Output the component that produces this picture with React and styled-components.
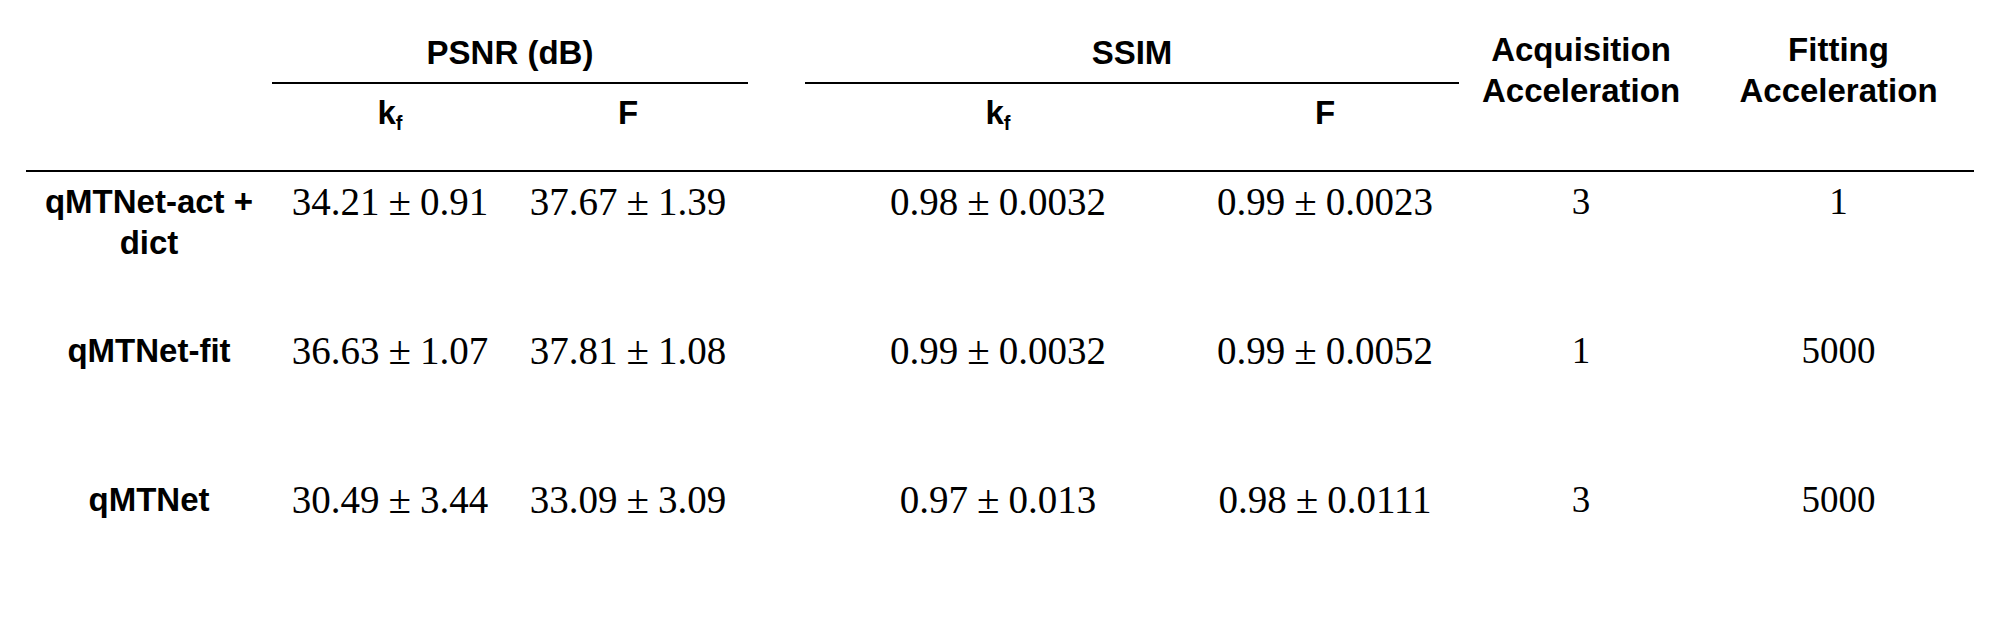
import React from "react";
import styled, { createGlobalStyle } from "styled-components";

const GlobalStyle = createGlobalStyle`
  html, body {
    margin: 0;
    padding: 0;
    background: #ffffff;
  }
  body {
    width: 2000px;
    height: 618px;
    overflow: hidden;
    color: #000;
    font-family: "Liberation Sans", Arial, sans-serif;
  }
`;

const Table = styled.div`
  display: grid;
  grid-template-columns: 246px 236px 240px 57px 386px 268px 244px 271px;
  grid-template-rows: 84px 86px 2px repeat(3, 149px);
  margin-left: 26px;
  width: 1948px;
`;

const HeadText = styled.div`
  font-family: "Liberation Sans", Arial, sans-serif;
  font-weight: 700;
  font-size: 33px;
  line-height: 41px;
  text-align: center;
`;

const GroupTitle = styled(HeadText)`
  grid-row: 1;
  grid-column: ${({ $col }) => $col} / span 2;
  padding-top: 32px;
  border-bottom: 2px solid #000;
  box-sizing: border-box;
`;

const SpanTitle = styled(HeadText)`
  grid-row: 1 / span 2;
  grid-column: ${({ $col }) => $col};
  padding-top: 29px;
`;

const SubTitle = styled(HeadText)`
  grid-row: 2;
  grid-column: ${({ $col }) => $col};
  padding-top: 8px;
  sub {
    font-size: 20px;
    line-height: 0;
    vertical-align: -6px;
  }
`;

const Rule = styled.div`
  grid-row: 3;
  grid-column: 1 / -1;
  background: #000;
`;

const RowLabel = styled(HeadText)`
  grid-column: 1;
  grid-row: ${({ $row }) => $row};
  padding-top: 9px;
`;

const Value = styled.div`
  grid-column: ${({ $col }) => $col};
  grid-row: ${({ $row }) => $row};
  padding-top: ${({ $plain }) => ($plain ? "9px" : "9px")};
  font-family: "Liberation Serif", "Times New Roman", serif;
  font-size: ${({ $plain }) => ($plain ? "37px" : "39px")};
  line-height: 41px;
  text-align: center;
  white-space: nowrap;
`;

const Pm = styled.span`
  display: inline-block;
  margin: 0 9px;
  font-size: 41px;
`;

const Stat = ({ mean, sd }) => (
  <>
    {mean}
    <Pm>±</Pm>
    {sd}
  </>
);

const rows = [
  {
    name: "qMTNet-act + dict",
    psnr: [["34.21", "0.91"], ["37.67", "1.39"]],
    ssim: [["0.98", "0.0032"], ["0.99", "0.0023"]],
    acq: "3",
    fit: "1",
  },
  {
    name: "qMTNet-fit",
    psnr: [["36.63", "1.07"], ["37.81", "1.08"]],
    ssim: [["0.99", "0.0032"], ["0.99", "0.0052"]],
    acq: "1",
    fit: "5000",
  },
  {
    name: "qMTNet",
    psnr: [["30.49", "3.44"], ["33.09", "3.09"]],
    ssim: [["0.97", "0.013"], ["0.98", "0.0111"]],
    acq: "3",
    fit: "5000",
  },
];

const Kf = () => (
  <>
    k<sub>f</sub>
  </>
);

export default function App() {
  return (
    <>
      <GlobalStyle />
      <Table>
        <GroupTitle $col={2}>PSNR (dB)</GroupTitle>
        <GroupTitle $col={5}>SSIM</GroupTitle>
        <SpanTitle $col={7}>
          Acquisition
          <br />
          Acceleration
        </SpanTitle>
        <SpanTitle $col={8}>
          Fitting
          <br />
          Acceleration
        </SpanTitle>
        <SubTitle $col={2}>
          <Kf />
        </SubTitle>
        <SubTitle $col={3}>F</SubTitle>
        <SubTitle $col={5}>
          <Kf />
        </SubTitle>
        <SubTitle $col={6}>F</SubTitle>
        <Rule />
        {rows.map((r, i) => {
          const row = i + 4;
          return (
            <React.Fragment key={r.name}>
              <RowLabel $row={row}>{r.name}</RowLabel>
              <Value $row={row} $col={2}>
                <Stat mean={r.psnr[0][0]} sd={r.psnr[0][1]} />
              </Value>
              <Value $row={row} $col={3}>
                <Stat mean={r.psnr[1][0]} sd={r.psnr[1][1]} />
              </Value>
              <Value $row={row} $col={5}>
                <Stat mean={r.ssim[0][0]} sd={r.ssim[0][1]} />
              </Value>
              <Value $row={row} $col={6}>
                <Stat mean={r.ssim[1][0]} sd={r.ssim[1][1]} />
              </Value>
              <Value $row={row} $col={7} $plain>{r.acq}</Value>
              <Value $row={row} $col={8} $plain>{r.fit}</Value>
            </React.Fragment>
          );
        })}
      </Table>
    </>
  );
}
